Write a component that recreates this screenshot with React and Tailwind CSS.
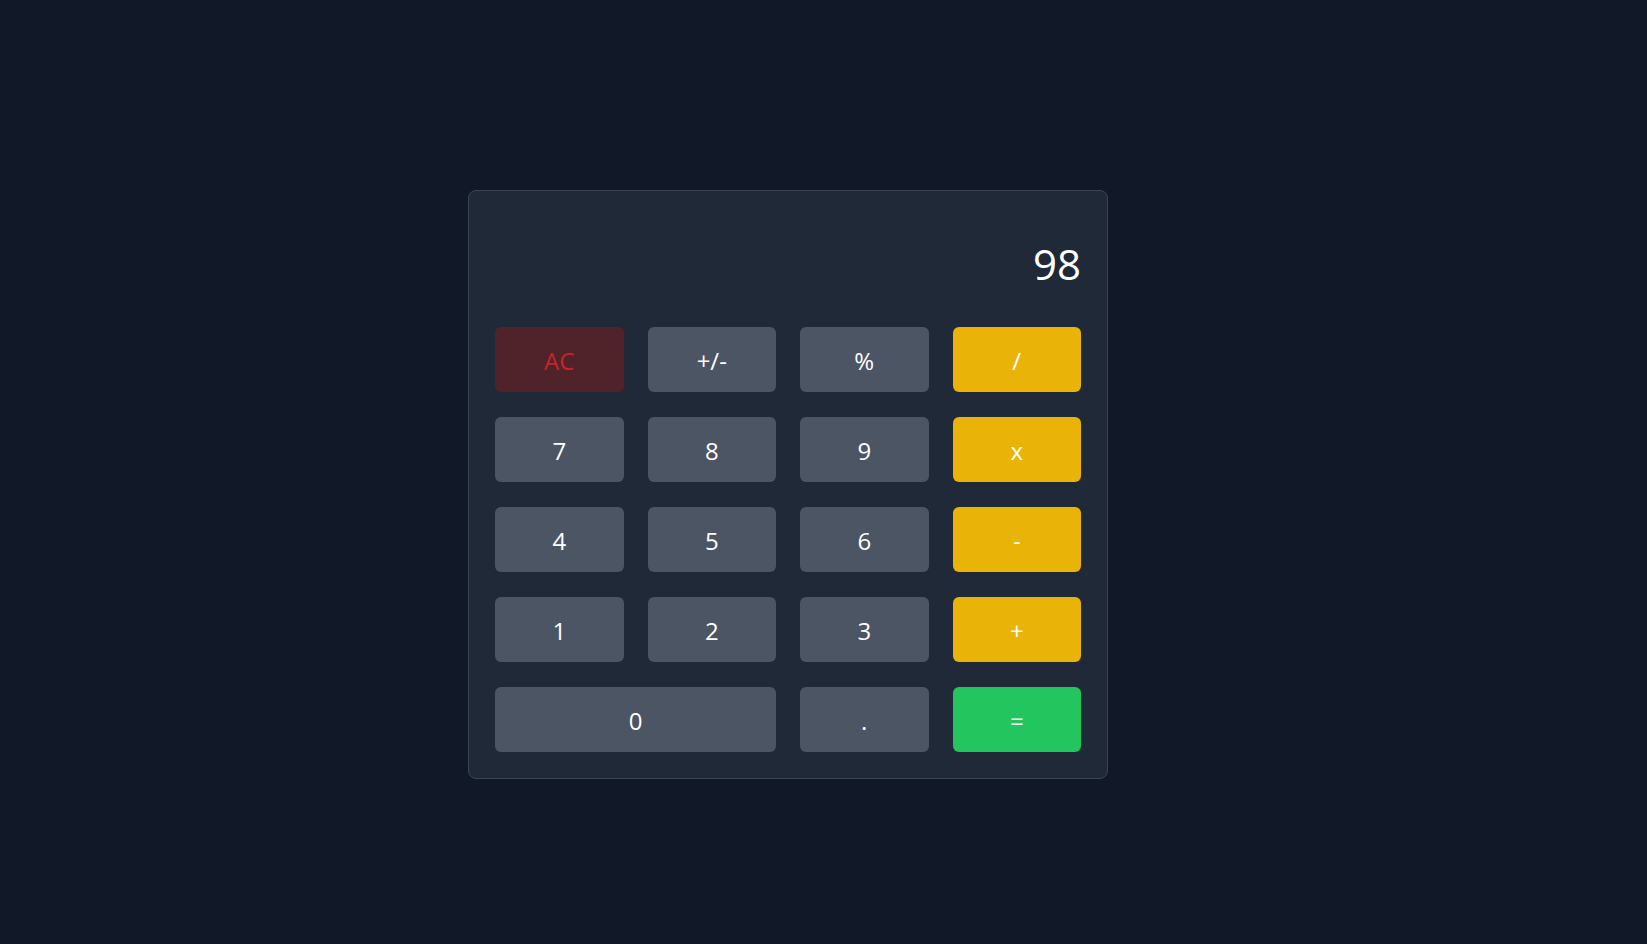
export default function App() {
  const gray = "bg-[#4b5563] text-white";
  const yellow = "bg-[#eab308] text-white";
  const keys = [
    { l: "AC", c: "bg-[#50232a] text-[#c8232a]" },
    { l: "+/-", c: gray },
    { l: "%", c: gray },
    { l: "/", c: yellow },
    { l: "7", c: gray },
    { l: "8", c: gray },
    { l: "9", c: gray },
    { l: "x", c: yellow },
    { l: "4", c: gray },
    { l: "5", c: gray },
    { l: "6", c: gray },
    { l: "-", c: yellow },
    { l: "1", c: gray },
    { l: "2", c: gray },
    { l: "3", c: gray },
    { l: "+", c: yellow },
    { l: "0", c: gray + " col-span-2" },
    { l: ".", c: gray },
    { l: "=", c: "bg-[#22c55e] text-white" },
  ];
  return (
    <div
      className="min-h-screen w-full bg-[#111827] pt-[190px] pl-[468px]"
      style={{ fontFamily: '"Open Sans", "Noto Sans", sans-serif' }}
    >
      <div className="w-[640px] rounded-lg border border-[#3a4556] bg-[#1f2937] p-[26px]">
        <div className="flex justify-end pt-[26px] pb-[42px]">
          <span className="text-[42px] leading-[42px] text-white">98</span>
        </div>
        <div className="grid grid-cols-4 gap-x-[24px] gap-y-[25px]">
          {keys.map((k) => (
            <button
              key={k.l}
              className={`h-[65px] rounded-md flex items-center justify-center pt-[2px] text-[24px] leading-[32px] ${k.c}`}
            >
              {k.l}
            </button>
          ))}
        </div>
      </div>
    </div>
  );
}
